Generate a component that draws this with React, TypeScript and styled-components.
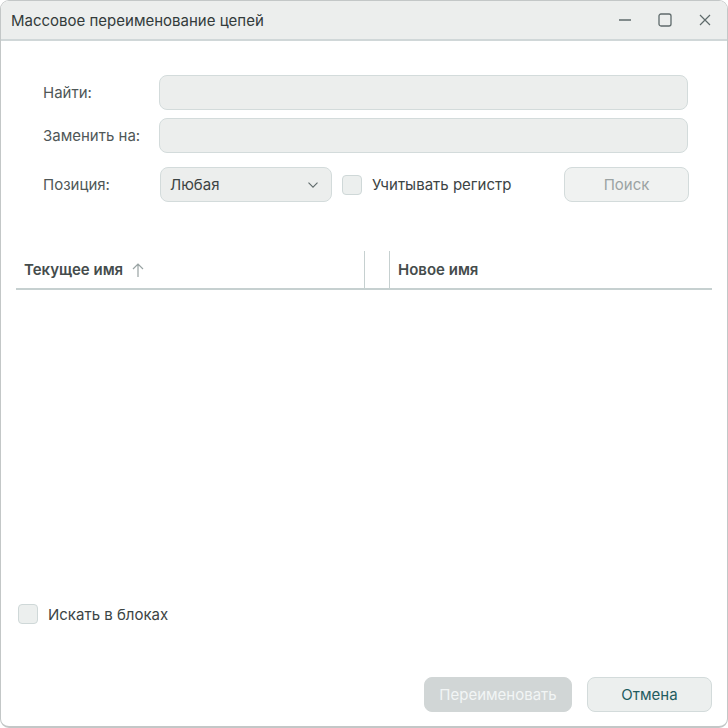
import { styled, createGlobalStyle } from "styled-components";

const GlobalStyle = createGlobalStyle`
  html, body {
    margin: 0;
    padding: 0;
    background: #ffffff;
  }
  * {
    box-sizing: border-box;
  }
`;

const Window = styled.div`
  width: 728px;
  height: 728px;
  display: flex;
  flex-direction: column;
  background: #ffffff;
  border: 1px solid #c3c7c7;
  border-bottom-width: 2px;
  border-radius: 9px;
  overflow: hidden;
  font-family: Inter, "Liberation Sans", sans-serif;
  font-size: 15px;
  color: #3c4444;
`;

const TitleBar = styled.div`
  height: 40px;
  flex: none;
  display: flex;
  align-items: center;
  justify-content: space-between;
  padding: 0 15px 0 10px;
  background: #eceeed;
  border-bottom: 2px solid #d0d7d8;
`;

const Title = styled.div`
  color: #333b3b;
`;

const WindowButtons = styled.div`
  display: flex;
  align-items: center;
  gap: 26px;
  color: #5f6a6b;

  svg {
    display: block;
  }
`;

const Form = styled.div`
  display: flex;
  flex-direction: column;
  gap: 8px;
  padding: 34px 0 0 42px;
`;

const FieldRow = styled.div`
  display: flex;
  align-items: center;
`;

const OptionsRow = styled.div`
  display: flex;
  align-items: center;
  margin-top: 6px;
`;

const Label = styled.div`
  width: 116px;
  flex: none;
  color: #4f5757;
`;

const TextInput = styled.div`
  height: 35px;
  width: 529px;
  background: #eceeed;
  border: 1px solid #d3dbdb;
  border-radius: 8px;
`;

const Select = styled.div`
  width: 172px;
  height: 35px;
  margin: 0 10px 0 1px;
  display: flex;
  align-items: center;
  justify-content: space-between;
  padding: 0 13px 0 9px;
  background: #eceeed;
  border: 1px solid #d3dbdb;
  border-radius: 8px;
  color: #3c4444;
`;

const CheckBox = styled.div`
  width: 20px;
  height: 20px;
  flex: none;
  background: #ecefee;
  border: 1px solid #cfd8d8;
  border-radius: 4px;
`;

const CheckLabel = styled.div`
  width: 202px;
  padding-left: 10px;
  color: #3c4444;
`;

const Button = styled.div<{ $primary?: boolean; $disabled?: boolean; $width: number }>`
  width: ${(p) => p.$width}px;
  height: 35px;
  display: flex;
  align-items: center;
  justify-content: center;
  border-radius: 8px;
  border: 1px solid ${(p) => (p.$primary ? "#d1d6d6" : "#d3dbdb")};
  background: ${(p) => (p.$primary ? "#d1d6d6" : p.$disabled ? "#f0f2f1" : "#ecefee")};
  color: ${(p) => (p.$primary ? "#f2f5f5" : p.$disabled ? "#9ba3a3" : "#1f5c60")};
`;

const Table = styled.div`
  margin: 49px 15px 0;
  flex: 1;
  display: flex;
  flex-direction: column;
`;

const TableHead = styled.div`
  height: 39px;
  display: grid;
  grid-template-columns: 348px 25px 1fr;
  border-bottom: 2px solid #c6d0d0;
`;

const HeadCell = styled.div<{ $divider?: boolean }>`
  display: flex;
  align-items: center;
  gap: 9px;
  padding-left: 8px;
  font-weight: 600;
  color: #454c4c;
  border-left: ${(p) => (p.$divider ? "1px solid #c6d0d0" : "none")};
`;

const SortIcon = styled.svg`
  color: #99a3a3;
  display: block;
`;

const BlockRow = styled.div`
  display: flex;
  align-items: center;
  gap: 10px;
  padding-left: 17px;
  height: 20px;
  margin-bottom: 53px;
`;

const Footer = styled.div`
  display: flex;
  justify-content: flex-end;
  gap: 15px;
  padding-right: 15px;
  margin-bottom: 14px;
`;

export default function App() {
  return (
    <>
      <GlobalStyle />
      <Window>
        <TitleBar>
          <Title>Массовое переименование цепей</Title>
          <WindowButtons>
            <svg width="14" height="14" viewBox="0 0 14 14" fill="none" stroke="currentColor" strokeWidth="1.3">
              <path d="M1 7h12" />
            </svg>
            <svg width="14" height="14" viewBox="0 0 14 14" fill="none" stroke="currentColor" strokeWidth="1.3">
              <rect x="1" y="1" width="12" height="12" rx="2" />
            </svg>
            <svg width="14" height="14" viewBox="0 0 14 14" fill="none" stroke="currentColor" strokeWidth="1.2">
              <path d="M2 2l10 10M12 2L2 12" />
            </svg>
          </WindowButtons>
        </TitleBar>

        <Form>
          <FieldRow>
            <Label>Найти:</Label>
            <TextInput />
          </FieldRow>
          <FieldRow>
            <Label>Заменить на:</Label>
            <TextInput />
          </FieldRow>
          <OptionsRow>
            <Label>Позиция:</Label>
            <Select>
              Любая
              <svg width="10" height="6" viewBox="0 0 10 6" fill="none" stroke="#5f6a6b" strokeWidth="1.1">
                <path d="M0.5 0.7L5 5.2l4.5-4.5" />
              </svg>
            </Select>
            <CheckBox />
            <CheckLabel>Учитывать регистр</CheckLabel>
            <Button $disabled $width={125}>
              Поиск
            </Button>
          </OptionsRow>
        </Form>

        <Table>
          <TableHead>
            <HeadCell>
              Текущее имя
              <SortIcon width="12" height="14" viewBox="0 0 12 14" fill="none" stroke="currentColor" strokeWidth="1.2">
                <path d="M6 14V1M1 6l5-5 5 5" />
              </SortIcon>
            </HeadCell>
            <HeadCell $divider />
            <HeadCell $divider>Новое имя</HeadCell>
          </TableHead>
        </Table>

        <BlockRow>
          <CheckBox />
          <span>Искать в блоках</span>
        </BlockRow>

        <Footer>
          <Button $primary $width={148}>
            Переименовать
          </Button>
          <Button $width={125}>Отмена</Button>
        </Footer>
      </Window>
    </>
  );
}
